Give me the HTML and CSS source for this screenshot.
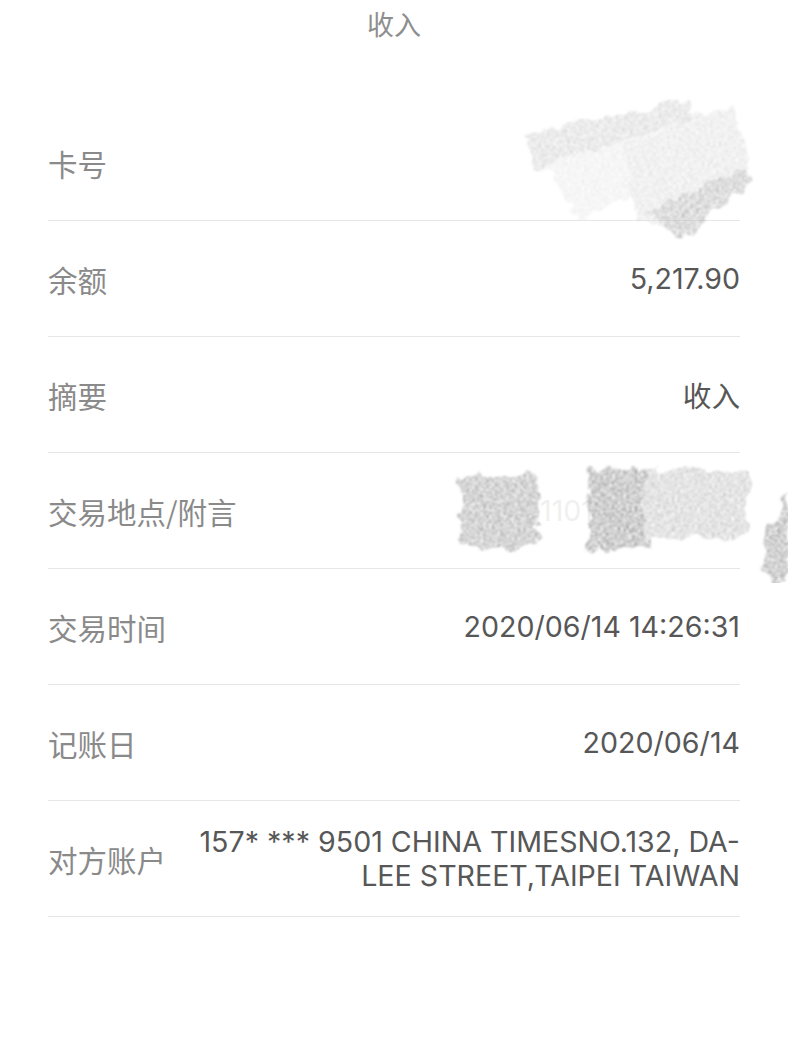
FILE: index.html
```html
<!DOCTYPE html>
<html lang="zh">
<head>
<meta charset="utf-8">
<title>收入</title>
<link rel="stylesheet" href="styles.css">
</head>
<body>
<div class="page">
  <header class="title">收入</header>
  <svg class="defs" width="0" height="0" aria-hidden="true">
    <defs>
      <filter id="grain" x="-20%" y="-20%" width="140%" height="140%">
        <feTurbulence type="fractalNoise" baseFrequency="0.06" numOctaves="2" seed="7" result="warp"/>
        <feDisplacementMap in="SourceGraphic" in2="warp" scale="18" xChannelSelector="R" yChannelSelector="G" result="rough"/>
        <feTurbulence type="fractalNoise" baseFrequency="0.35 0.9" numOctaves="3" seed="4" result="noise"/>
        <feColorMatrix in="noise" type="matrix" values="0 0 0 0 0  0 0 0 0 0  0 0 0 0 0  0 0 0 2.4 -0.75" result="mask"/>
        <feComposite in="rough" in2="mask" operator="in" result="tex"/>
        <feGaussianBlur in="tex" stdDeviation="0.9"/>
      </filter>
    </defs>
  </svg>
  <div class="list">
    <div class="row">
      <span class="label">卡号</span>
      <span class="value"></span>
      <svg class="scribble s1" width="250" height="160" viewBox="0 0 250 160" aria-hidden="true">
        <g filter="url(#grain)">
          <polygon points="5,40 165,8 175,26 15,76" fill="#d4d4d4"/>
          <polygon points="25,70 178,24 192,60 55,128" fill="#ebebeb"/>
          <polygon points="100,52 208,14 232,74 150,138 112,124" fill="#e0e0e0"/>
          <polygon points="128,118 226,72 230,90 155,148" fill="#b6b6b6"/>
        </g>
      </svg>
    </div>
    <div class="row">
      <span class="label">余额</span>
      <span class="value">5,217.90</span>
    </div>
    <div class="row">
      <span class="label">摘要</span>
      <span class="value">收入</span>
    </div>
    <div class="row">
      <span class="label">交易地点/附言</span>
      <span class="value faint">1101</span>
      <svg class="scribble s4" width="350" height="125" viewBox="0 0 350 125" aria-hidden="true">
        <g filter="url(#grain)">
          <rect x="22" y="18" width="78" height="72" fill="#a4a4a4"/>
          <rect x="150" y="12" width="62" height="78" fill="#969696"/>
          <rect x="205" y="12" width="105" height="68" fill="#c4c4c4"/>
          <polygon points="322,85 350,35 350,125 330,125" fill="#9c9c9c"/>
        </g>
      </svg>
    </div>
    <div class="row">
      <span class="label">交易时间</span>
      <span class="value">2020/06/14 14:26:31</span>
    </div>
    <div class="row">
      <span class="label">记账日</span>
      <span class="value">2020/06/14</span>
    </div>
    <div class="row">
      <span class="label">对方账户</span>
      <span class="value multi">157* *** 9501 CHINA TIMESNO.132, DA-<br>LEE STREET,TAIPEI TAIWAN</span>
    </div>
  </div>
</div>
</body>
</html>
```

FILE: styles.css
```css
html, body {
  margin: 0;
  padding: 0;
  background: #ffffff;
}

.page {
  width: 788px;
  min-height: 1050px;
  font-family: Inter, "Noto Sans CJK SC", sans-serif;
  position: relative;
  overflow: hidden;
}

.defs {
  position: absolute;
  width: 0;
  height: 0;
}

.title {
  height: 48px;
  line-height: 48px;
  text-align: center;
  font-family: "Noto Sans CJK SC", sans-serif;
  font-size: 27px;
  color: #8e8e8e;
  margin-bottom: 57px;
}

.list {
  padding: 0 48px;
  display: flex;
  flex-direction: column;
}

.row {
  position: relative;
  height: 115px;
  border-bottom: 1px solid #e6e6e6;
  display: flex;
  align-items: center;
  justify-content: space-between;
}

.label {
  font-family: "Noto Sans CJK SC", sans-serif;
  font-size: 29.5px;
  color: #8a8a8a;
  white-space: nowrap;
}

.value {
  font-family: Inter, "Noto Sans CJK SC", sans-serif;
  font-size: 28.6px;
  color: #575757;
  text-align: right;
}

.value.multi {
  line-height: 34px;
}

.value.faint {
  color: #f0f0f0;
  position: absolute;
  left: 492px;
}

.scribble {
  position: absolute;
  pointer-events: none;
}

.s1 {
  left: 474px;
  top: -12px;
}

.s4 {
  left: 390px;
  top: 5px;
}
```
